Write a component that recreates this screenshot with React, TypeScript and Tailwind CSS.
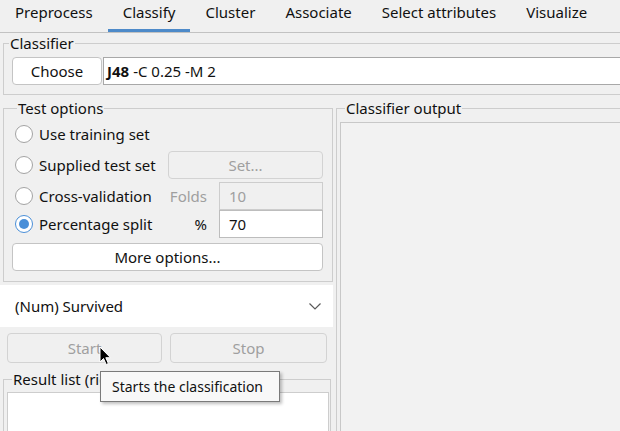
import React from 'react';

const tabs = ['Preprocess', 'Classify', 'Cluster', 'Associate', 'Select attributes', 'Visualize'];

function Radio({ checked }: { checked?: boolean }) {
  if (checked) {
    return (
      <span className="w-[18px] h-[18px] rounded-full border-[1.5px] border-[#4a8fd8] bg-white flex items-center justify-center shrink-0">
        <span className="w-[10px] h-[10px] rounded-full bg-[#4a8fd8]" />
      </span>
    );
  }
  return <span className="w-[18px] h-[18px] rounded-full border border-[#a3a3a3] bg-white shrink-0" />;
}

function Option({ label, checked }: { label: string; checked?: boolean }) {
  return (
    <div className="flex items-center flex-1 ml-[3px]">
      <Radio checked={checked} />
      <span className="ml-[6px]">{label}</span>
    </div>
  );
}

export default function App() {
  return (
    <div
      className="relative w-[620px] h-[431px] overflow-hidden bg-[#f0f0f0] text-[15px] leading-[20px] text-[#111]"
      style={{ fontFamily: '"Noto Sans", "Open Sans", sans-serif' }}
    >
      {/* tab bar */}
      <div className="flex h-[33px] border-b border-[#c2c2c2]">
        {tabs.map((t) => (
          <div
            key={t}
            className={
              'h-[32px] px-[15px] pt-[2px] border-b-[3px] ' +
              (t === 'Classify' ? 'border-[#4d8ac9]' : 'border-transparent')
            }
          >
            {t}
          </div>
        ))}
      </div>

      {/* classifier */}
      <fieldset className="ml-[3px] w-[700px] border border-[#cdcdcd] pt-[4px] pb-[9px]">
        <legend className="ml-[5px] px-[1px] leading-[20px]">Classifier</legend>
        <div className="flex">
          <button className="ml-[8px] w-[90px] h-[28px] bg-white border border-[#c4c4c4] rounded-[4px]">
            Choose
          </button>
          <div className="flex-1 h-[28px] ml-[1px] bg-white border border-[#a8a8a8] border-r-0 flex items-center pl-[3px]">
            <span className="font-bold">J48</span>
            <span className="ml-[4px]">-C 0.25 -M 2</span>
          </div>
        </div>
      </fieldset>

      <div className="flex">
        {/* left column */}
        <div className="w-[335px] flex flex-col">
          <fieldset className="mt-[3px] ml-[3px] w-[330px] border border-[#cdcdcd] pl-[8px] pr-[9px] pb-[10px]">
            <legend className="ml-[5px] px-[1px] leading-[20px]">Test options</legend>
            <div className="flex flex-col">
              <div className="flex items-center h-[28px] mt-[2px]">
                <Option label="Use training set" />
              </div>
              <div className="flex items-center h-[29px] mt-[2px]">
                <Option label="Supplied test set" />
                <button className="w-[155px] h-[28px] border border-[#d3d3d3] rounded-[4px] text-[#9f9f9f]">
                  Set...
                </button>
              </div>
              <div className="flex items-end h-[29px] mt-[2px]">
                <div className="flex items-center h-[28px] flex-1">
                  <Option label="Cross-validation" />
                  <span className="text-[#9f9f9f]">Folds</span>
                </div>
                <div className="ml-[12px] w-[104px] h-[28px] border border-[#cdcdcd] flex items-center pl-[9px] text-[#9f9f9f]">
                  10
                </div>
              </div>
              <div className="flex items-center h-[28px]">
                <Option label="Percentage split" checked />
                <span>%</span>
                <div className="ml-[12px] w-[104px] h-[28px] bg-white border border-[#bdbdbd] flex items-center pl-[9px]">
                  70
                </div>
              </div>
              <button className="mt-[5px] h-[28px] bg-white border border-[#c4c4c4] rounded-[4px]">
                More options...
              </button>
            </div>
          </fieldset>

          <div className="mt-[3px] h-[42px] bg-white flex items-center justify-between pl-[15px] pr-[12px]">
            <span>(Num) Survived</span>
            <svg width="12" height="7" viewBox="0 0 12 7">
              <path d="M0.5 0.5 L6 6 L11.5 0.5" fill="none" stroke="#5a5a5a" strokeWidth="1.2" />
            </svg>
          </div>

          <div className="flex mt-[6px] ml-[7px] gap-[8px]">
            <button className="w-[155px] h-[30px] border border-[#d3d3d3] rounded-[4px] text-[#9f9f9f]">Start</button>
            <button className="w-[157px] h-[30px] border border-[#d3d3d3] rounded-[4px] text-[#9f9f9f]">Stop</button>
          </div>

          <fieldset className="mt-[6px] ml-[3px] w-[328px] border border-[#cdcdcd] pl-[3px] pr-[1px]">
            <legend className="ml-[5px] px-[1px] leading-[20px] whitespace-nowrap">
              Result list (right-click for options)
            </legend>
            <div className="mt-[3px] h-[120px] bg-white border border-[#cdcdcd]" />
          </fieldset>
        </div>

        {/* right column */}
        <div className="flex-1">
          <fieldset className="mt-[3px] ml-[3px] w-[400px] border border-[#cdcdcd] pl-[3px]">
            <legend className="ml-[5px] px-[1px] leading-[20px]">Classifier output</legend>
            <div className="mt-[4px] h-[400px] bg-[#f2f2f2] border border-[#c8c8c8]" />
          </fieldset>
        </div>
      </div>

      {/* tooltip */}
      <div className="absolute left-[100px] top-[371px] w-[180px] h-[31px] bg-[#f8f8f8] border border-[#7a7a7a] shadow-[2px_2px_3px_rgba(0,0,0,0.25)] flex items-center pl-[11px] text-[14px]">
        Starts the classification
      </div>

      {/* mouse pointer */}
      <svg className="absolute left-[99px] top-[346px]" width="14" height="21" viewBox="0 0 14 21">
        <path d="M1 1 L1 16 L4.5 12.5 L7.2 18.5 L9.4 17.5 L6.8 11.7 L11.5 11.7 Z" fill="#000" stroke="#fff" strokeWidth="1" />
      </svg>
    </div>
  );
}
